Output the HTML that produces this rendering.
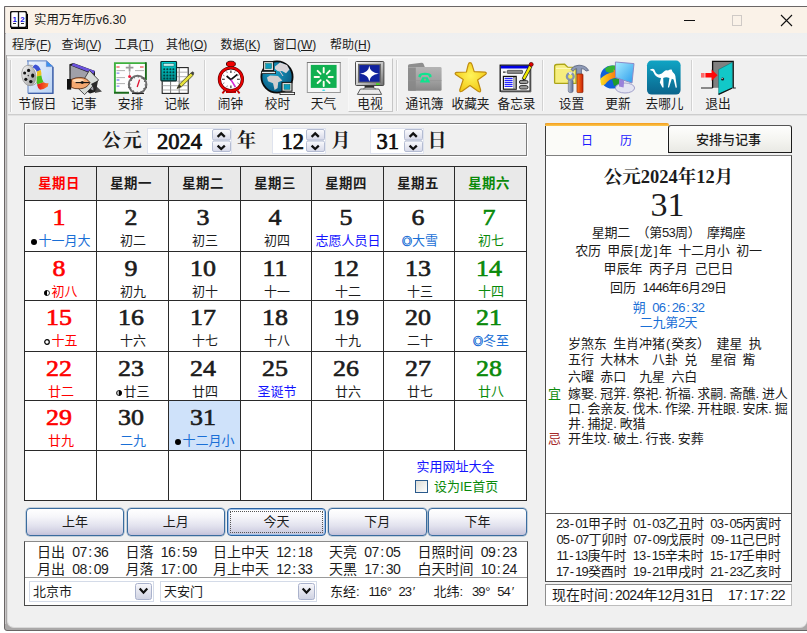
<!DOCTYPE html><html lang="zh-CN"><head><meta charset="utf-8"><title>实用万年历v6.30</title><style>
*{box-sizing:border-box;margin:0;padding:0}
html,body{width:807px;height:633px;overflow:hidden;background:#fff}
body{position:relative;font-family:"Liberation Sans","Noto Sans CJK SC",sans-serif;font-size:13px;color:#1c1c1c}
.a{position:absolute}
.t{position:absolute;white-space:pre;line-height:16px;height:16px}
.c{text-align:center}
.ui{font-size:12px}
.b{font-weight:bold}
.sf{font-family:"Liberation Serif","Noto Serif CJK SC",serif}
.num{position:absolute;font-family:"Liberation Serif","Noto Serif CJK SC",serif;font-size:24px;line-height:24px;height:24px;text-align:center;white-space:pre;-webkit-text-stroke:0.65px currentColor;transform:scaleX(1.08)}
.lun{position:absolute;font-size:13px;line-height:16px;height:16px;text-align:center;white-space:pre}
.r{color:#f00}.g{color:#0a8a0a}.bl{color:#1a6fd6}.fb{color:#1414ff}
.vl{position:absolute;width:1px;background:#2a2a2a}
.hl{position:absolute;height:1px;background:#2a2a2a}
.btn{position:absolute;top:507.5px;height:28px;width:98.5px;border:1px solid #3a6c9e;border-radius:4px;background:linear-gradient(#fff 0%,#f6f6fa 30%,#e2e2ee 65%,#cdcce0 92%,#c2c0da 100%);box-shadow:0 0 0 0.5px rgba(58,108,158,0.5);text-align:center;font-size:13px;line-height:26px}
.spin{position:absolute;width:19px;height:23px;top:129px}
.inp{position:absolute;top:128px;height:26px;background:#fff;border:1px solid #dfe3ee}
.hd{position:absolute;top:127px;height:28px;line-height:28px;font-size:19px;font-weight:bold;font-family:"Liberation Serif","Noto Serif CJK SC",serif;white-space:pre}
.hn{position:absolute;top:128px;height:28px;line-height:28px;font-size:22.5px;font-family:"Liberation Serif",serif;white-space:pre;-webkit-text-stroke:0.7px #000}
i.d{display:inline-block;width:6.5px;font-style:normal;text-align:left}
.ws{word-spacing:2.9px}
u{text-decoration:underline}
</style></head><body>
<div class="a" style="left:4px;top:6px;width:806px;height:625px;background:#aaa8a8;border:1px solid #6a6666;border-radius:0 0 3px 3px"></div>
<div class="a" style="left:5px;top:34px;width:1px;height:590px;background:#c9c7c7"></div>
<div class="a" style="left:7px;top:34px;width:800px;height:594px;background:#f0f0f0;border-left:1px solid #dedede;border-bottom:1px solid #d8d8d8;border-radius:0 0 7px 7px"></div>
<div class="a" style="left:5px;top:7px;width:802px;height:26px;background:#faf2e8;border-left:1px solid #e6e0da"></div>
<div class="a" style="left:6px;top:33px;width:801px;height:22px;background:linear-gradient(#eeeff0,#f0f0f0 30%)"></div>
<div class="a" style="left:7px;top:55px;width:800px;height:1px;background:#c2c2c2"></div>
<div class="a" style="left:7px;top:56px;width:800px;height:1px;background:#ececec"></div>
<div class="a" style="left:7px;top:57px;width:800px;height:1px;background:#fafafa"></div>
<div class="a" style="left:8px;top:114px;width:799px;height:1px;background:#cdcdcd"></div>
<div class="a" style="left:8px;top:115px;width:799px;height:1px;background:#e2e2e2"></div>
<svg class="a" style="left:10px;top:11px" width="18" height="18" viewBox="0 0 18 18"><rect x="0.5" y="0.5" width="16" height="16" rx="2" fill="#fff" stroke="#111" stroke-width="1.6"/><path d="M1 17.2h16.5V3" fill="none" stroke="#000" stroke-width="1.6"/><line x1="8.5" y1="0" x2="8.5" y2="17" stroke="#111" stroke-width="1.3"/><text x="2.6" y="10.5" font-family="Liberation Sans,sans-serif" font-size="8" font-weight="bold" fill="#1414e6">1</text><text x="10.3" y="10.5" font-family="Liberation Sans,sans-serif" font-size="8" font-weight="bold" fill="#1414e6">2</text><rect x="3" y="12" width="3" height="1" fill="#333"/><rect x="11" y="12" width="3" height="1" fill="#333"/></svg>
<div class="t" style="left:34px;top:12px;font-size:12.4px">实用万年历v6.30</div>
<div class="a" style="left:684px;top:20px;width:11px;height:1px;background:#111"></div>
<div class="a" style="left:731.5px;top:15px;width:10.5px;height:10.5px;border:1px solid #cfcac6"></div>
<svg class="a" style="left:780px;top:14px" width="13" height="13" viewBox="0 0 13 13"><path d="M1 1L12 12M12 1L1 12" stroke="#111" stroke-width="1.1" fill="none"/></svg>
<div class="t ui" style="left:12px;top:37px">程序(<u>F</u>)</div>
<div class="t ui" style="left:61.5px;top:37px">查询(<u>V</u>)</div>
<div class="t ui" style="left:114.5px;top:37px">工具(<u>T</u>)</div>
<div class="t ui" style="left:166px;top:37px">其他(<u>O</u>)</div>
<div class="t ui" style="left:220.5px;top:37px">数据(<u>K</u>)</div>
<div class="t ui" style="left:273px;top:37px">窗口(<u>W</u>)</div>
<div class="t ui" style="left:330px;top:37px">帮助(<u>H</u>)</div>
<div class="a" style="left:10px;top:60px;width:1px;height:52px;background:#cfcfcf"></div><div class="a" style="left:11px;top:60px;width:1px;height:52px;background:#fbfbfb"></div>
<div class="a" style="left:204px;top:60px;width:1px;height:51px;background:#d2d2d2"></div>
<div class="a" style="left:205px;top:60px;width:1px;height:51px;background:#fcfcfc"></div>
<div class="a" style="left:396px;top:60px;width:1px;height:51px;background:#d2d2d2"></div>
<div class="a" style="left:397px;top:60px;width:1px;height:51px;background:#fcfcfc"></div>
<div class="a" style="left:542px;top:60px;width:1px;height:51px;background:#d2d2d2"></div>
<div class="a" style="left:543px;top:60px;width:1px;height:51px;background:#fcfcfc"></div>
<div class="a" style="left:691px;top:60px;width:1px;height:51px;background:#d2d2d2"></div>
<div class="a" style="left:692px;top:60px;width:1px;height:51px;background:#fcfcfc"></div>
<div class="a" style="left:348px;top:58px;width:45px;height:54px;background:#f4f4f4;border-right:1px solid #c6c6c6;border-bottom:1px solid #c6c6c6;border-top:1px solid #f8f8f8;border-left:1px solid #f8f8f8"></div>
<svg width="0" height="0" style="position:absolute"><defs>
<linearGradient id="gPage" x1="0" y1="0" x2="1" y2="1"><stop offset="0" stop-color="#eef4fd"/><stop offset="1" stop-color="#b9d2f3"/></linearGradient>
<linearGradient id="gReel" x1="0" y1="0" x2="1" y2="1"><stop offset="0" stop-color="#ffffff"/><stop offset="1" stop-color="#8e8e8e"/></linearGradient>
<linearGradient id="gRed" x1="0" y1="0" x2="1" y2="0"><stop offset="0" stop-color="#e81818"/><stop offset="1" stop-color="#fa7a2a"/></linearGradient>
<linearGradient id="gCalc" x1="0" y1="0" x2="0" y2="1"><stop offset="0" stop-color="#00d0d0"/><stop offset="1" stop-color="#008888"/></linearGradient>
<radialGradient id="gGlobe" cx="0.4" cy="0.35" r="0.75"><stop offset="0" stop-color="#18a0c8"/><stop offset="1" stop-color="#085078"/></radialGradient>
<linearGradient id="gMon" x1="0" y1="0" x2="1" y2="1"><stop offset="0" stop-color="#fafafa"/><stop offset="0.5" stop-color="#c8c8c8"/><stop offset="1" stop-color="#6e6e6e"/></linearGradient>
<linearGradient id="gFold" x1="0" y1="0" x2="0" y2="1"><stop offset="0" stop-color="#b4b4b4"/><stop offset="0.55" stop-color="#a2a2a2"/><stop offset="1" stop-color="#868686"/></linearGradient>
<radialGradient id="gStar" cx="0.5" cy="0.45" r="0.6"><stop offset="0" stop-color="#fff45a"/><stop offset="1" stop-color="#f2c814"/></radialGradient>
<linearGradient id="gHam" x1="0" y1="0" x2="1" y2="0"><stop offset="0" stop-color="#ff7a18"/><stop offset="1" stop-color="#c82008"/></linearGradient>
<linearGradient id="gWr" x1="0" y1="0" x2="1" y2="0"><stop offset="0" stop-color="#b8c2d4"/><stop offset="1" stop-color="#5c6c94"/></linearGradient>
<linearGradient id="gScr" x1="0" y1="0" x2="1" y2="1"><stop offset="0" stop-color="#a8ecff"/><stop offset="1" stop-color="#2a9cec"/></linearGradient>
<linearGradient id="gQn" x1="0" y1="0" x2="0" y2="1"><stop offset="0" stop-color="#10a4c4"/><stop offset="1" stop-color="#0a648c"/></linearGradient>
<linearGradient id="gArr" x1="0" y1="0" x2="1" y2="0"><stop offset="0" stop-color="#fadc20"/><stop offset="1" stop-color="#f87a10"/></linearGradient>
</defs></svg>
<!-- 1 holidays -->
<svg class="a" style="left:16px;top:58px" width="44" height="38" viewBox="0 0 44 38">
<path d="M11.3 2.9H30.4L36.9 8.6V35.3H12V2.9Z" fill="url(#gPage)" stroke="#5f82c4" stroke-width="1"/>
<path d="M12.4 35.3H36.9V9" fill="none" stroke="#3f5fa8" stroke-width="1.3"/>
<path d="M30.4 2.9V8.6H36.9Z" fill="#3a92f2" stroke="#5f82c4" stroke-width="0.6"/>
<ellipse cx="15" cy="17.2" rx="6.9" ry="10.2" transform="rotate(-10 15 17.2)" fill="#f4f4f4" stroke="#8a8a8a" stroke-width="0.7"/><ellipse cx="12.8" cy="17.5" rx="7" ry="10.3" transform="rotate(-10 12.8 17.5)" fill="url(#gReel)" stroke="#8a8a8a" stroke-width="0.6"/>
<circle cx="12.6" cy="12.4" r="1.6" fill="#111"/><circle cx="8.6" cy="15" r="1.5" fill="#111"/><circle cx="9.8" cy="21.3" r="1.6" fill="#111"/><circle cx="14.8" cy="23.6" r="1.7" fill="#111"/><ellipse cx="16.7" cy="17.7" rx="1.6" ry="2.1" fill="#111"/><circle cx="12.3" cy="17.6" r="0.8" fill="#444"/>
<path d="M16.6 9.3Q18 6.6 19.6 6.6Q23 7.6 24.8 12L21 13.6Q19.6 10.6 16.6 9.3Z" fill="#3c52d4"/>
<path d="M21 13.6L24.8 12Q25.6 15 25.4 17.6L20.8 18.6Q21.4 16 21 13.6Z" fill="#f0c21c"/>
<path d="M20.8 18.6L25.4 17.6Q25.8 21.6 27.6 24.2L21 26.4Q20.4 22.4 20.8 18.6Z" fill="#4cc01c"/>
<path d="M21 26.4L27.6 24.2Q30 26 32.5 25L31.8 28.6Q28 31.6 24 31.8Q21.6 30 21 26.4Z" fill="url(#gRed)"/>
</svg>
<!-- 2 notes -->
<svg class="a" style="left:62px;top:58px" width="44" height="38" viewBox="0 0 44 38">
<path d="M7.4 6.2L11.4 5L33 13V34L28 35.4L7.4 22.4Z" fill="#1e1e1e"/><path d="M33 27L40 33.4L33 35Z" fill="#4a4a4a"/>
<path d="M8.6 7.6L31.4 16.6V32.6L8.6 21.4Z" fill="#a0a0a8"/>
<path d="M11.2 5.3L32.8 13L31.6 15.8L9.6 7.4Z" fill="#6a52dc"/>
<path d="M16.4 30.6L27.4 12.4L36.6 22L22.6 36.6Z" fill="#d6dad6" stroke="#3c3c3c" stroke-width="0.9"/>
<path d="M29 26L36 22.6L34 33.4Z" fill="#2a2a2a"/>
<rect x="5" y="21" width="4.2" height="10.6" fill="#111"/>
<path d="M9.4 21.4Q14 19.2 19 19.6Q25 20 28 24.6Q25 30.4 18 30.8Q12 31 9.4 29.4Z" fill="#f4a870" stroke="#4a2008" stroke-width="0.8"/>
<ellipse cx="16.4" cy="22.6" rx="5.4" ry="1.8" fill="#ffd8b4"/>
<path d="M13.6 24.6H27.6" stroke="#111" stroke-width="1.1"/><path d="M17.5 24.5L20.2 23L23 24.5L20.2 26Z" fill="#111"/>
</svg>
<!-- 3 schedule -->
<svg class="a" style="left:109px;top:58px" width="44" height="38" viewBox="0 0 44 38">
<rect x="5.9" y="5.1" width="31" height="29.6" fill="#fdfdfd"/>
<path d="M5.9 34.7V5.1H36.9" fill="none" stroke="#3eb03e" stroke-width="1.9"/>
<path d="M36.9 4.2V22M5 34.7H20" fill="none" stroke="#1c6a1c" stroke-width="1.9"/>
<path d="M7.5 12.6H16M7.5 19.6H16M7.5 25.6H16M26 12.6H35" stroke="#a8a8a8" stroke-width="0.9"/>
<path d="M7.4 9H10.6M31 9H34.6" stroke="#f07070" stroke-width="1.3"/>
<path d="M7.6 15.2H10.4M7.6 22H10.4M7.6 28.2H10.4" stroke="#8a8af0" stroke-width="1.3"/>
<path d="M20.6 6.2V13.4M16.8 9.6H24.4" stroke="#9a9a9a" stroke-width="1.8"/><path d="M20.6 13.4V17" stroke="#b0b0b0" stroke-width="1"/>
<circle cx="20.6" cy="18.4" r="1.5" fill="#f01838"/>
<circle cx="28.6" cy="26.6" r="8.8" fill="#f6f6f6" stroke="#6e6e6e" stroke-width="2"/>
<circle cx="28.6" cy="26.6" r="7.6" fill="none" stroke="#444" stroke-width="1.2" stroke-dasharray="0.8 3.18"/>
<path d="M21.8 19.6L23.4 21.2M35.4 19.6L33.8 21.2M19.2 29.4H20.6M36.6 29.4H38" stroke="#555" stroke-width="1.4"/>
<path d="M28.2 29L30.6 21.6" stroke="#e01030" stroke-width="1.3"/>
<path d="M23 35.4H35" stroke="#222" stroke-width="1.2"/>
</svg>
<!-- 4 accounts -->
<svg class="a" style="left:155px;top:58px" width="44" height="38" viewBox="0 0 44 38">
<rect x="7.2" y="9.6" width="26" height="25.8" fill="#fff" stroke="#222" stroke-width="1.1"/>
<path d="M15.6 10V35M24.2 10V35" stroke="#555" stroke-width="0.8"/>
<path d="M7.5 14.2H33M7.5 18.7H33M7.5 23.2H33M7.5 27.7H33M7.5 32H33" stroke="#9a9a9a" stroke-width="0.8"/>
<rect x="5.9" y="3.5" width="15.6" height="19.4" rx="0.8" fill="url(#gCalc)" stroke="#0a2a2a" stroke-width="1.2"/>
<rect x="8.4" y="5.6" width="10.6" height="2.5" fill="#c4eaea" stroke="#044" stroke-width="0.4"/>
<g fill="#033f3f"><circle cx="9.2" cy="11.2" r="1"/><circle cx="12.3" cy="11.2" r="1"/><circle cx="15.4" cy="11.2" r="1"/><circle cx="18.4" cy="11.2" r="1"/><circle cx="9.2" cy="14.3" r="1"/><circle cx="12.3" cy="14.3" r="1"/><circle cx="15.4" cy="14.3" r="1"/><circle cx="18.4" cy="14.3" r="1"/><circle cx="9.2" cy="17.4" r="1"/><circle cx="12.3" cy="17.4" r="1"/><circle cx="15.4" cy="17.4" r="1"/><circle cx="18.4" cy="17.4" r="1"/><circle cx="9.2" cy="20.4" r="1"/><circle cx="12.3" cy="20.4" r="1"/><circle cx="15.4" cy="20.4" r="1"/><circle cx="18.4" cy="20.4" r="1"/></g>
<path d="M22 30.4L24.4 26.2L36.4 14.6L38.6 16.8L26.4 28.8Z" fill="#e6e23c" stroke="#44441a" stroke-width="0.8"/>
<path d="M22 30.4L24.4 26.2L26.4 28.8Z" fill="#333"/>
<path d="M35.6 15.2L37.6 13.2L39.4 15L37.6 17.2Z" fill="#444"/>
</svg>
<!-- 5 alarm -->
<svg class="a" style="left:209px;top:58px" width="44" height="38" viewBox="0 0 44 38">
<ellipse cx="21.9" cy="6" rx="4.5" ry="2.8" fill="#f20000" stroke="#3c0000" stroke-width="0.9"/>
<path d="M15.6 32.6L13.4 35.4M28.4 32.6L30.6 35.4M17 34H27" stroke="#c80000" stroke-width="1.8"/>
<circle cx="21.9" cy="21.3" r="11.5" fill="#fff" stroke="#5a0000" stroke-width="3.2"/>
<circle cx="21.9" cy="21.3" r="11.5" fill="none" stroke="#e60000" stroke-width="2"/>
<path d="M21.9 12.4V15M21.9 27.6V30.2M13 21.3H15.8M28 21.3H30.8" stroke="#222" stroke-width="1.1"/>
<path d="M17.6 13.4L18.4 15M26.2 13.4L25.4 15M17.6 29.2L18.4 27.6M26.2 29.2L25.4 27.6M14 17L15.4 17.8M14 25.6L15.4 24.8M29.8 17L28.4 17.8M29.8 25.6L28.4 24.8" stroke="#8a8a9a" stroke-width="1"/>
<path d="M17.6 18L21.9 21.6L28.4 16.4" fill="none" stroke="#111" stroke-width="1.7"/>
<path d="M21.9 21.6L26.4 29" stroke="#d428d4" stroke-width="1.5"/>
</svg>
<!-- 6 time sync -->
<svg class="a" style="left:256px;top:58px" width="44" height="38" viewBox="0 0 44 38">
<circle cx="21" cy="19" r="15.6" fill="url(#gGlobe)" stroke="#0a0a0a" stroke-width="1.8"/>
<path d="M11 19.6L14 17.6L22 18L26.4 22.4L22.2 24.2L21.6 30L18.6 32L17 25.2L12 23.2Z" fill="#d2cece"/>
<path d="M19 8.4L24 4.6L31 7L33.4 11.4L30 15.2L26 13L22 13.2L19 11Z" fill="#d8d4d8"/>
<path d="M23 12L27 18" stroke="#e8c8d0" stroke-width="1"/>
<rect x="7.6" y="3.6" width="10" height="9" fill="#dcdcdc" stroke="#111" stroke-width="1"/>
<rect x="9.6" y="5.5" width="6" height="5.2" fill="#0e9cc0" stroke="#064" stroke-width="0.4"/>
<rect x="5.6" y="13.4" width="14" height="2.2" fill="#ececec" stroke="#222" stroke-width="0.8"/>
<rect x="26" y="24.4" width="10" height="8.8" fill="#dcdcdc" stroke="#111" stroke-width="1"/>
<rect x="28" y="26.4" width="6" height="5" fill="#0e9cc0" stroke="#064" stroke-width="0.4"/>
<rect x="24" y="34.4" width="14.6" height="2.2" fill="#f4f4f4" stroke="#222" stroke-width="0.8"/>
</svg>
<!-- 7 weather -->
<svg class="a" style="left:302px;top:58px" width="44" height="38" viewBox="0 0 44 38">
<rect x="5.3" y="4.5" width="33" height="30" fill="#f6f6f6" stroke="#9a9a9a" stroke-width="1"/>
<path d="M5 4.5H38.6" stroke="#777" stroke-width="1"/>
<rect x="8.8" y="6.9" width="25.8" height="23" fill="#10b050"/>
<g stroke="#fffdf0" stroke-width="1.9" stroke-linecap="round"><path d="M21.7 10V14.4M21.7 23.8V28M12.6 19H17M26.6 19H30.8M15.6 12.8L18.6 15.8M27.6 12.8L24.8 15.8M15.6 25L18.6 22.2M27.6 25L24.8 22.2"/></g>
<ellipse cx="21.7" cy="32.3" rx="1.6" ry="0.7" fill="#3cd6ea"/>
</svg>
<!-- 8 tv -->
<svg class="a" style="left:348px;top:58px" width="44" height="38" viewBox="0 0 44 38">
<rect x="7.5" y="3.5" width="28.4" height="24" rx="1" fill="url(#gMon)" stroke="#3a3a3a" stroke-width="0.9"/>
<rect x="10" y="5.8" width="23" height="19" fill="#6a6a6a"/>
<rect x="11.4" y="7.1" width="20.2" height="16.6" fill="#10229e"/>
<path d="M21.3 7.8Q21.9 14.6 30.8 15.8Q21.9 16.8 21.3 23.4Q20.7 16.8 12 15.8Q20.7 14.6 21.3 7.8Z" fill="#fff"/>
<ellipse cx="21.3" cy="15.8" rx="3" ry="2.6" fill="#fff" opacity="0.8"/>
<rect x="28" y="25.3" width="3.6" height="1.7" fill="#46d420"/>
<rect x="16.6" y="27.6" width="9.6" height="2.6" fill="#2e2e2e"/>
<path d="M12.4 31H30.8L33.6 36.4H9.4Z" fill="#eaeaea" stroke="#4a4a4a" stroke-width="0.9"/>
<path d="M15 31L18 29.6H25L28 31" fill="#aaa" stroke="#555" stroke-width="0.6"/>
</svg>
<!-- 9 contacts -->
<svg class="a" style="left:402px;top:58px" width="44" height="38" viewBox="0 0 44 38">
<path d="M6 10V7.6Q6 6.4 7.4 6.2L19.6 4.8Q21 4.8 21.6 6L22.6 8.6V10Z" fill="#8e8e8e"/>
<rect x="6" y="9" width="33.6" height="23.8" rx="1.4" fill="url(#gFold)"/>
<rect x="6" y="9.6" width="7.8" height="23.2" fill="#868686" opacity="0.8"/>
<path d="M6 22.6H39.6" stroke="#929292" stroke-width="0.6"/>
<path d="M16.4 19Q16 16.4 18.4 15.6Q23 14 27.6 15.6Q30 16.4 29.6 19L27.2 19.4Q27 17.4 25.6 17H20.4Q19 17.4 18.8 19.4Z" fill="#0ee48e"/>
<path d="M20.4 19.2H25.6L28.2 24.6H17.8Z" fill="#0ee48e"/>
<circle cx="23" cy="21.6" r="1.2" fill="#9a9a9a"/>
</svg>
<!-- 10 favourites -->
<svg class="a" style="left:449px;top:58px" width="44" height="38" viewBox="0 0 44 38">
<path d="M21 4.6Q22.4 4.6 23 6.6L25.2 13.6L36 14.2Q38.4 14.8 36.4 16.6L28.6 22L31.6 32Q31.8 34.6 29.4 33.4L21 27.6L13 33.2Q10.400 34.400 10.800 31.800L14.200 21.600L7 16.800Q5 15 7.600 14.400L17.400 14L19.200 6.600Q19.800 4.600 21 4.600Z" fill="url(#gStar)" stroke="#c08c10" stroke-width="1.2" stroke-linejoin="round"/>
</svg>
<!-- 11 memo -->
<svg class="a" style="left:495px;top:58px" width="44" height="38" viewBox="0 0 44 38">
<rect x="5.2" y="7.2" width="30" height="26" fill="#f8f8f8" stroke="#111" stroke-width="1.3"/>
<rect x="5.8" y="7.8" width="27.4" height="2.7" fill="#0000e4"/>
<path d="M6 34H36V11" fill="none" stroke="#777" stroke-width="0.8"/>
<rect x="8" y="13.4" width="2.6" height="1.5" fill="#555"/>
<rect x="12.200" y="12.400" width="15.400" height="3" rx="0.600" fill="#8a8a8a" stroke="#333" stroke-width="0.700"/>
<rect x="8.400" y="18.400" width="12.800" height="12.800" fill="#fff" stroke="#111" stroke-width="1.200"/>
<path d="M9.600 20.400H17.600M9.600 22.400H17.600M9.600 24.400H17.600M9.600 26.400H17.600M9.600 28.400H17.600" stroke="#2828ff" stroke-width="1.100"/>
<rect x="18.800" y="19.200" width="1.800" height="11.400" fill="#b4b4b4" stroke="#444" stroke-width="0.400"/>
<rect x="24.400" y="22.400" width="8.600" height="3.200" rx="1.600" fill="#9a9a9a" stroke="#222" stroke-width="0.900"/>
<rect x="24.400" y="27.600" width="8.600" height="3.400" rx="1.700" fill="#9a9a9a" stroke="#222" stroke-width="0.900"/>
<path d="M28.400 21.400L35.600 8" stroke="#222" stroke-width="3.800" stroke-linecap="butt"/>
<path d="M28.600 21L35.400 8.400" stroke="#f2ea00" stroke-width="2.400"/>
<circle cx="36.200" cy="6.400" r="2" fill="#e40000" stroke="#400" stroke-width="0.700"/>
<path d="M27.400 22.800L28 20.400L30 21.400Z" fill="#111"/>
</svg>
<!-- 12 settings -->
<svg class="a" style="left:549px;top:58px" width="44" height="38" viewBox="0 0 44 38">
<path d="M5.600 24.400V8.600Q5.600 6.600 7.600 6.500L15.600 6.200L19 9.400H27V25.400H6.600Q5.600 25.400 5.600 24.400Z" fill="#f6ee7e" stroke="#aca418" stroke-width="1.300"/>
<path d="M7 10.400H26" stroke="#fdf8b8" stroke-width="1.200"/>
<path d="M22 11.400Q24 7.400 30 7.200Q37 7.400 39.600 12.400L37.200 13Q35 10.600 32.400 10.600V16.400H27.600V10.600Q25.200 10.800 24.200 13.400Z" fill="#8e9ab6" stroke="#56607c" stroke-width="0.800"/>
<rect x="28" y="16" width="6" height="18.600" rx="0.800" fill="url(#gHam)" stroke="#8a2000" stroke-width="0.700"/>
<rect x="19.300" y="21.600" width="4.800" height="13" rx="1.800" fill="url(#gWr)" stroke="#56607c" stroke-width="0.600"/>
<circle cx="21.300" cy="18.400" r="3.400" fill="#f4ec50" stroke="#8494b0" stroke-width="2.300"/>
<path d="M19.600 14.200L21.300 16.600L23 14.200" fill="#f0f0f0" stroke="#f0f0f0" stroke-width="1"/>
</svg>
<!-- 13 update -->
<svg class="a" style="left:596px;top:58px" width="44" height="38" viewBox="0 0 44 38">
<circle cx="16" cy="19" r="11.600" fill="#1060da"/>
<path d="M9 10.400Q13 6.600 19 7.600L20 13L14 15L10 13.400Z" fill="#34b434"/>
<path d="M16 21L23 20L24 26L18 28Z" fill="#1f9c2c"/>
<path d="M4.600 20.600Q10 15.400 17.600 14V11.200L20 13.400V19.400Q13 20.600 9 26.400L5.600 27.600Q4 24 4.600 20.600Z" fill="url(#gArr)"/>
<ellipse cx="29" cy="30" rx="9.600" ry="5" fill="#e4e4f2" stroke="#9a9ac6" stroke-width="0.900"/>
<path d="M23 20.600L28.200 22.400L27.600 29.400L23 28.400Z" fill="#9a82da"/>
<path d="M19.400 4L38 5.600L36 25L19.600 19.600Z" fill="url(#gScr)" stroke="#8c8cc8" stroke-width="1"/>
</svg>
<!-- 14 qunar -->
<svg class="a" style="left:642px;top:58px" width="44" height="38" viewBox="0 0 44 38">
<rect x="5" y="2.600" width="33.600" height="34" rx="4.600" fill="url(#gQn)"/>
<path d="M8.300 11.200L11 10.800Q12.600 11 13 13Q14 16.400 17 16.400Q20 16 22 13.600Q24 11.600 26 12.600Q28 11 29.600 11.600L30.600 14Q33.600 16 33.600 20L34.900 29.600L33.700 29.800L31.600 21.600L29.800 20.800L27 29.600L25.900 29.400L27.400 20Q24 18.600 21.200 20L21.600 29.600L20.400 29.600L17.800 24.600L19 20Q15 20 12.600 16.600Q11.600 14 10.600 13L8.300 12.300Z" fill="#fff"/>
</svg>
<!-- 15 exit -->
<svg class="a" style="left:696px;top:58px" width="44" height="38" viewBox="0 0 44 38">
<rect x="16.600" y="3.400" width="20.600" height="26.400" fill="#808080"/>
<path d="M16.600 30V3.400H37.200V30" fill="none" stroke="#111" stroke-width="1.300"/>
<path d="M5 30H16.600M37 30H39.800" stroke="#222" stroke-width="1.200"/>
<path d="M22.600 11.600L36.400 4.200V30L22.600 36.400Z" fill="#12c8c8" stroke="#0a6a6a" stroke-width="0.500"/>
<path d="M22.600 36.400L36.400 30" stroke="#111" stroke-width="1.200"/>
<circle cx="26.600" cy="21" r="1.600" fill="#222"/><circle cx="26.100" cy="20.500" r="0.600" fill="#fff"/>
<rect x="5" y="15" width="3.600" height="4.600" fill="#ff6a6a"/>
<path d="M9.400 15H15.600V11.400L21.600 17.200L15.600 22.800V19.600H9.400Z" fill="#ff0808"/>
</svg>

<div class="t c" style="left:7.5px;top:95.5px;width:60px;font-size:12.7px">节假日</div>
<div class="t c" style="left:54px;top:95.5px;width:60px;font-size:12.7px">记事</div>
<div class="t c" style="left:100.5px;top:95.5px;width:60px;font-size:12.7px">安排</div>
<div class="t c" style="left:147px;top:95.5px;width:60px;font-size:12.7px">记帐</div>
<div class="t c" style="left:200.5px;top:95.5px;width:60px;font-size:12.7px">闹钟</div>
<div class="t c" style="left:247.5px;top:95.5px;width:60px;font-size:12.7px">校时</div>
<div class="t c" style="left:293.5px;top:95.5px;width:60px;font-size:12.7px">天气</div>
<div class="t c" style="left:340px;top:95.5px;width:60px;font-size:12.7px">电视</div>
<div class="t c" style="left:394.5px;top:95.5px;width:60px;font-size:12.7px">通讯簿</div>
<div class="t c" style="left:440.5px;top:95.5px;width:60px;font-size:12.7px">收藏夹</div>
<div class="t c" style="left:486.5px;top:95.5px;width:60px;font-size:12.7px">备忘录</div>
<div class="t c" style="left:541.5px;top:95.5px;width:60px;font-size:12.7px">设置</div>
<div class="t c" style="left:588px;top:95.5px;width:60px;font-size:12.7px">更新</div>
<div class="t c" style="left:634.5px;top:95.5px;width:60px;font-size:12.7px">去哪儿</div>
<div class="t c" style="left:688px;top:95.5px;width:60px;font-size:12.7px">退出</div>
<div class="a" style="left:24px;top:123px;width:503px;height:33px;border:1px solid #7c7c7c;box-shadow:inset 1px 1px 0 #fff, 1px 1px 0 #fff"></div>
<div class="hd" style="left:102px;letter-spacing:1.8px">公元</div>
<div class="inp" style="left:147px;width:85px"></div>
<div class="hn" style="left:157px">2024</div>
<div class="hd" style="left:237px">年</div>
<div class="inp" style="left:272px;width:54px"></div>
<div class="hn" style="left:281.5px">12</div>
<div class="hd" style="left:331.5px">月</div>
<div class="inp" style="left:370px;width:54px"></div>
<div class="hn" style="left:376.5px">31</div>
<div class="hd" style="left:427.5px">日</div>
<svg class="spin" style="left:212px" width="19" height="23" viewBox="0 0 19 23"><defs><linearGradient id="sg0" x1="0" y1="0" x2="0" y2="1"><stop offset="0" stop-color="#fbfbfd"/><stop offset="1" stop-color="#d6d8e8"/></linearGradient></defs><rect x="0.5" y="0.5" width="18" height="10.5" rx="1.5" fill="url(#sg0)" stroke="#b4bcd2"/><rect x="0.5" y="12" width="18" height="10.5" rx="1.5" fill="url(#sg0)" stroke="#b4bcd2"/><path d="M5.6 7.8L9.2 4.4L12.8 7.8" fill="none" stroke="#111" stroke-width="2.3"/><path d="M5.6 16.6L9.2 20L12.8 16.6" fill="none" stroke="#111" stroke-width="2.3"/></svg>
<svg class="spin" style="left:306px" width="19" height="23" viewBox="0 0 19 23"><defs><linearGradient id="sg1" x1="0" y1="0" x2="0" y2="1"><stop offset="0" stop-color="#fbfbfd"/><stop offset="1" stop-color="#d6d8e8"/></linearGradient></defs><rect x="0.5" y="0.5" width="18" height="10.5" rx="1.5" fill="url(#sg1)" stroke="#b4bcd2"/><rect x="0.5" y="12" width="18" height="10.5" rx="1.5" fill="url(#sg1)" stroke="#b4bcd2"/><path d="M5.6 7.8L9.2 4.4L12.8 7.8" fill="none" stroke="#111" stroke-width="2.3"/><path d="M5.6 16.6L9.2 20L12.8 16.6" fill="none" stroke="#111" stroke-width="2.3"/></svg>
<svg class="spin" style="left:404px" width="19" height="23" viewBox="0 0 19 23"><defs><linearGradient id="sg2" x1="0" y1="0" x2="0" y2="1"><stop offset="0" stop-color="#fbfbfd"/><stop offset="1" stop-color="#d6d8e8"/></linearGradient></defs><rect x="0.5" y="0.5" width="18" height="10.5" rx="1.5" fill="url(#sg2)" stroke="#b4bcd2"/><rect x="0.5" y="12" width="18" height="10.5" rx="1.5" fill="url(#sg2)" stroke="#b4bcd2"/><path d="M5.6 7.8L9.2 4.4L12.8 7.8" fill="none" stroke="#111" stroke-width="2.3"/><path d="M5.6 16.6L9.2 20L12.8 16.6" fill="none" stroke="#111" stroke-width="2.3"/></svg>
<div class="a" style="left:25px;top:167px;width:501px;height:33px;background:#e9e9e9"></div>
<div class="a" style="left:25px;top:201px;width:501px;height:299px;background:#fff"></div>
<div class="a" style="left:169px;top:401px;width:71px;height:49px;background:#cfe2fa"></div>
<div class="vl" style="left:24px;top:166px;height:335px"></div>
<div class="vl" style="left:96px;top:166px;height:335px"></div>
<div class="vl" style="left:168px;top:166px;height:335px"></div>
<div class="vl" style="left:240px;top:166px;height:335px"></div>
<div class="vl" style="left:311px;top:166px;height:335px"></div>
<div class="vl" style="left:383px;top:166px;height:335px"></div>
<div class="vl" style="left:454px;top:166px;height:285px"></div>
<div class="vl" style="left:526px;top:166px;height:335px"></div>
<div class="hl" style="left:24px;top:166px;width:503px"></div>
<div class="hl" style="left:24px;top:200px;width:503px"></div>
<div class="hl" style="left:24px;top:251px;width:503px"></div>
<div class="hl" style="left:24px;top:300px;width:503px"></div>
<div class="hl" style="left:24px;top:351px;width:503px"></div>
<div class="hl" style="left:24px;top:400px;width:503px"></div>
<div class="hl" style="left:24px;top:450px;width:503px"></div>
<div class="hl" style="left:24px;top:500px;width:503px"></div>
<div class="t b c r" style="left:23px;top:175.5px;width:72px;font-size:13.4px;letter-spacing:0.4px">星期日</div>
<div class="t b c" style="left:95px;top:175.5px;width:72px;font-size:13.4px;letter-spacing:0.4px">星期一</div>
<div class="t b c" style="left:167px;top:175.5px;width:72px;font-size:13.4px;letter-spacing:0.4px">星期二</div>
<div class="t b c" style="left:239px;top:175.5px;width:72px;font-size:13.4px;letter-spacing:0.4px">星期三</div>
<div class="t b c" style="left:310px;top:175.5px;width:72px;font-size:13.4px;letter-spacing:0.4px">星期四</div>
<div class="t b c" style="left:382px;top:175.5px;width:72px;font-size:13.4px;letter-spacing:0.4px">星期五</div>
<div class="t b c g" style="left:453px;top:175.5px;width:72px;font-size:13.4px;letter-spacing:0.4px">星期六</div>
<div class="num r" style="left:23px;top:205px;width:72px">1</div>
<div class="lun bl" style="left:25px;top:233px;width:72px"><svg width="6" height="6" viewBox="0 0 6 6" style="vertical-align:0px;margin-right:1px"><circle cx="3" cy="3" r="3" fill="#000"/></svg>十一月大</div>
<div class="num" style="left:95px;top:205px;width:72px">2</div>
<div class="lun" style="left:97px;top:233px;width:72px">初二</div>
<div class="num" style="left:167px;top:205px;width:72px">3</div>
<div class="lun" style="left:169px;top:233px;width:72px">初三</div>
<div class="num" style="left:239px;top:205px;width:72px">4</div>
<div class="lun" style="left:241px;top:233px;width:72px">初四</div>
<div class="num" style="left:310px;top:205px;width:72px">5</div>
<div class="lun fb" style="left:312px;top:233px;width:72px">志愿人员日</div>
<div class="num" style="left:382px;top:205px;width:72px">6</div>
<div class="lun bl" style="left:384px;top:233px;width:72px"><span style="display:inline-block;width:10px;font-size:10px;vertical-align:0.5px;text-align:center;-webkit-text-stroke:0.55px currentColor">◎</span>大雪</div>
<div class="num g" style="left:453px;top:205px;width:72px">7</div>
<div class="lun g" style="left:455px;top:233px;width:72px">初七</div>
<div class="num r" style="left:23px;top:256px;width:72px">8</div>
<div class="lun r" style="left:25px;top:284px;width:72px"><svg width="6" height="6" viewBox="0 0 6 6" style="vertical-align:0px;margin-right:1px"><circle cx="3" cy="3" r="2.5" fill="#fff" stroke="#000" stroke-width="0.8"/><path d="M3 0.2A2.8 2.8 0 0 0 3 5.8Z" fill="#000"/></svg>初八</div>
<div class="num" style="left:95px;top:256px;width:72px">9</div>
<div class="lun" style="left:97px;top:284px;width:72px">初九</div>
<div class="num" style="left:167px;top:256px;width:72px">10</div>
<div class="lun" style="left:169px;top:284px;width:72px">初十</div>
<div class="num" style="left:239px;top:256px;width:72px">11</div>
<div class="lun" style="left:241px;top:284px;width:72px">十一</div>
<div class="num" style="left:310px;top:256px;width:72px">12</div>
<div class="lun" style="left:312px;top:284px;width:72px">十二</div>
<div class="num" style="left:382px;top:256px;width:72px">13</div>
<div class="lun" style="left:384px;top:284px;width:72px">十三</div>
<div class="num g" style="left:453px;top:256px;width:72px">14</div>
<div class="lun g" style="left:455px;top:284px;width:72px">十四</div>
<div class="num r" style="left:23px;top:305px;width:72px">15</div>
<div class="lun r" style="left:25px;top:333px;width:72px"><svg width="6" height="6" viewBox="0 0 6 6" style="vertical-align:0px;margin-right:1px"><circle cx="3" cy="3" r="2.3" fill="#fff" stroke="#000" stroke-width="1.2"/></svg>十五</div>
<div class="num" style="left:95px;top:305px;width:72px">16</div>
<div class="lun" style="left:97px;top:333px;width:72px">十六</div>
<div class="num" style="left:167px;top:305px;width:72px">17</div>
<div class="lun" style="left:169px;top:333px;width:72px">十七</div>
<div class="num" style="left:239px;top:305px;width:72px">18</div>
<div class="lun" style="left:241px;top:333px;width:72px">十八</div>
<div class="num" style="left:310px;top:305px;width:72px">19</div>
<div class="lun" style="left:312px;top:333px;width:72px">十九</div>
<div class="num" style="left:382px;top:305px;width:72px">20</div>
<div class="lun" style="left:384px;top:333px;width:72px">二十</div>
<div class="num g" style="left:453px;top:305px;width:72px">21</div>
<div class="lun bl" style="left:455px;top:333px;width:72px"><span style="display:inline-block;width:10px;font-size:10px;vertical-align:0.5px;text-align:center;-webkit-text-stroke:0.55px currentColor">◎</span>冬至</div>
<div class="num r" style="left:23px;top:356px;width:72px">22</div>
<div class="lun r" style="left:25px;top:384px;width:72px">廿二</div>
<div class="num" style="left:95px;top:356px;width:72px">23</div>
<div class="lun" style="left:97px;top:384px;width:72px"><svg width="6" height="6" viewBox="0 0 6 6" style="vertical-align:0px;margin-right:1px"><circle cx="3" cy="3" r="2.5" fill="#bbb" stroke="#000" stroke-width="0.8"/><path d="M3 0.2A2.8 2.8 0 0 1 3 5.8Z" fill="#000"/></svg>廿三</div>
<div class="num" style="left:167px;top:356px;width:72px">24</div>
<div class="lun" style="left:169px;top:384px;width:72px">廿四</div>
<div class="num" style="left:239px;top:356px;width:72px">25</div>
<div class="lun fb" style="left:241px;top:384px;width:72px">圣诞节</div>
<div class="num" style="left:310px;top:356px;width:72px">26</div>
<div class="lun" style="left:312px;top:384px;width:72px">廿六</div>
<div class="num" style="left:382px;top:356px;width:72px">27</div>
<div class="lun" style="left:384px;top:384px;width:72px">廿七</div>
<div class="num g" style="left:453px;top:356px;width:72px">28</div>
<div class="lun g" style="left:455px;top:384px;width:72px">廿八</div>
<div class="num r" style="left:23px;top:405px;width:72px">29</div>
<div class="lun r" style="left:25px;top:433px;width:72px">廿九</div>
<div class="num" style="left:95px;top:405px;width:72px">30</div>
<div class="lun bl" style="left:97px;top:433px;width:72px">二九</div>
<div class="num" style="left:167px;top:405px;width:72px">31</div>
<div class="lun bl" style="left:169px;top:433px;width:72px"><svg width="6" height="6" viewBox="0 0 6 6" style="vertical-align:0px;margin-right:1px"><circle cx="3" cy="3" r="3" fill="#000"/></svg>十二月小</div>
<div class="t c fb" style="left:384px;top:459px;width:143px">实用网址大全</div>
<div class="a" style="left:415px;top:480px;width:13px;height:13px;border:1px solid #2a5a8c;background:linear-gradient(135deg,#dcdcd6,#fff)"></div>
<div class="t g" style="left:434px;top:479px">设为IE首页</div>
<div class="btn" style="left:25.8px">上年</div>
<div class="btn" style="left:126.6px">上月</div>
<div class="btn" style="left:227.3px;border-color:#2a62a0;box-shadow:inset 0 0 0 1px #9cc0e8"><div class="a" style="left:2px;top:2px;right:2px;bottom:2px;border:1px dotted #555"></div>今天</div>
<div class="btn" style="left:328px">下月</div>
<div class="btn" style="left:428.3px">下年</div>
<div class="a" style="left:24px;top:541px;width:504px;height:65px;background:#fff;border:1px solid #4a4a4a;border-top-color:#8a8a8a"></div>
<div class="a" style="left:25px;top:577px;width:502px;height:1px;background:#9a9a9a"></div>
<div class="t" style="left:37px;top:544px;font-size:14px">日出<i style="display:inline-block;font-style:normal;width:7.2px;text-align:center">&nbsp;</i><span style="letter-spacing:-0.59px">07</span><i style="display:inline-block;font-style:normal;width:7.2px;text-align:center">:</i><span style="letter-spacing:-0.59px">36</span></div>
<div class="t" style="left:125.5px;top:544px;font-size:14px">日落<i style="display:inline-block;font-style:normal;width:7.2px;text-align:center">&nbsp;</i><span style="letter-spacing:-0.59px">16</span><i style="display:inline-block;font-style:normal;width:7.2px;text-align:center">:</i><span style="letter-spacing:-0.59px">59</span></div>
<div class="t" style="left:213px;top:544px;font-size:14px">日上中天<i style="display:inline-block;font-style:normal;width:7.2px;text-align:center">&nbsp;</i><span style="letter-spacing:-0.59px">12</span><i style="display:inline-block;font-style:normal;width:7.2px;text-align:center">:</i><span style="letter-spacing:-0.59px">18</span></div>
<div class="t" style="left:329px;top:544px;font-size:14px">天亮<i style="display:inline-block;font-style:normal;width:7.2px;text-align:center">&nbsp;</i><span style="letter-spacing:-0.59px">07</span><i style="display:inline-block;font-style:normal;width:7.2px;text-align:center">:</i><span style="letter-spacing:-0.59px">05</span></div>
<div class="t" style="left:417.5px;top:544px;font-size:14px">日照时间<i style="display:inline-block;font-style:normal;width:7.2px;text-align:center">&nbsp;</i><span style="letter-spacing:-0.59px">09</span><i style="display:inline-block;font-style:normal;width:7.2px;text-align:center">:</i><span style="letter-spacing:-0.59px">23</span></div>
<div class="t" style="left:37px;top:561px;font-size:14px">月出<i style="display:inline-block;font-style:normal;width:7.2px;text-align:center">&nbsp;</i><span style="letter-spacing:-0.59px">08</span><i style="display:inline-block;font-style:normal;width:7.2px;text-align:center">:</i><span style="letter-spacing:-0.59px">09</span></div>
<div class="t" style="left:125.5px;top:561px;font-size:14px">月落<i style="display:inline-block;font-style:normal;width:7.2px;text-align:center">&nbsp;</i><span style="letter-spacing:-0.59px">17</span><i style="display:inline-block;font-style:normal;width:7.2px;text-align:center">:</i><span style="letter-spacing:-0.59px">00</span></div>
<div class="t" style="left:213px;top:561px;font-size:14px">月上中天<i style="display:inline-block;font-style:normal;width:7.2px;text-align:center">&nbsp;</i><span style="letter-spacing:-0.59px">12</span><i style="display:inline-block;font-style:normal;width:7.2px;text-align:center">:</i><span style="letter-spacing:-0.59px">33</span></div>
<div class="t" style="left:329px;top:561px;font-size:14px">天黑<i style="display:inline-block;font-style:normal;width:7.2px;text-align:center">&nbsp;</i><span style="letter-spacing:-0.59px">17</span><i style="display:inline-block;font-style:normal;width:7.2px;text-align:center">:</i><span style="letter-spacing:-0.59px">30</span></div>
<div class="t" style="left:417.5px;top:561px;font-size:14px">白天时间<i style="display:inline-block;font-style:normal;width:7.2px;text-align:center">&nbsp;</i><span style="letter-spacing:-0.59px">10</span><i style="display:inline-block;font-style:normal;width:7.2px;text-align:center">:</i><span style="letter-spacing:-0.59px">24</span></div>
<div class="a" style="left:29px;top:581px;width:125px;height:21px;background:#fff;border:1px solid #d4dbe8"></div>
<div class="t" style="left:33px;top:584px">北京市</div>
<svg class="a" style="left:135px;top:583px" width="17" height="17" viewBox="0 0 17 17"><defs><linearGradient id="cg29" x1="0" y1="0" x2="0" y2="1"><stop offset="0" stop-color="#f8f8fb"/><stop offset="1" stop-color="#cfd2e2"/></linearGradient></defs><rect x="0.5" y="0.5" width="16" height="16" rx="2" fill="url(#cg29)" stroke="#aab2cc"/><path d="M4.7 5.6L8.5 9.7L12.3 5.6" fill="none" stroke="#111" stroke-width="2.2"/></svg>
<div class="a" style="left:160px;top:581px;width:157px;height:21px;background:#fff;border:1px solid #d4dbe8"></div>
<div class="t" style="left:164px;top:584px">天安门</div>
<svg class="a" style="left:298px;top:583px" width="17" height="17" viewBox="0 0 17 17"><defs><linearGradient id="cg160" x1="0" y1="0" x2="0" y2="1"><stop offset="0" stop-color="#f8f8fb"/><stop offset="1" stop-color="#cfd2e2"/></linearGradient></defs><rect x="0.5" y="0.5" width="16" height="16" rx="2" fill="url(#cg160)" stroke="#aab2cc"/><path d="M4.7 5.6L8.5 9.7L12.3 5.6" fill="none" stroke="#111" stroke-width="2.2"/></svg>
<div class="t" style="left:330px;top:584px">东经:</div>
<div class="t" style="left:368.5px;top:584px"><span style="letter-spacing:-1.03px">116</span><i style="display:inline-block;font-style:normal;width:6.2px;text-align:center">°</i><i style="display:inline-block;font-style:normal;width:6.2px;text-align:center">&nbsp;</i><span style="letter-spacing:-1.03px">23</span><i style="display:inline-block;font-style:normal;width:6.2px;text-align:center">′</i></div>
<div class="t" style="left:433.5px;top:584px">北纬:</div>
<div class="t" style="left:472px;top:584px"><span style="letter-spacing:-0.93px">39</span><i style="display:inline-block;font-style:normal;width:6.3px;text-align:center">°</i><i style="display:inline-block;font-style:normal;width:6.3px;text-align:center">&nbsp;</i><span style="letter-spacing:-0.93px">54</span><i style="display:inline-block;font-style:normal;width:6.3px;text-align:center">′</i></div>
<div class="a" style="left:668px;top:125px;width:124px;height:28px;border:1px solid #1c1c1c;border-top-color:#555;border-radius:3px 3px 0 0;background:linear-gradient(#fefefd,#f4f4f0 55%,#e9e9e4)"></div>
<div class="t c" style="left:666.5px;top:132px;width:124px;font-weight:500">安排与记事</div>
<div class="a" style="left:545px;top:155px;width:247px;height:427px;background:#fff;border:1px solid #4a4a4a;border-top:1px solid #808080"></div>
<div class="a" style="left:545px;top:123px;width:123px;height:32px;background:#fbfbf8;border-left:1px solid #3a3a3a;border-right:1px solid #fff;border-radius:2px 2px 0 0"></div>
<div class="a" style="left:545px;top:123px;width:124px;height:3px;background:linear-gradient(#f49c1c,#fbc850);border-radius:2px 2px 0 0"></div>
<div class="t ui" style="left:581px;top:133px;color:#1a1aff">日</div>
<div class="t ui" style="left:620px;top:133px;color:#1a1aff">历</div>
<div class="t c b sf" style="left:546px;top:165px;width:245px;font-size:18.5px;line-height:24px;height:24px">公元2024年12月</div>
<div class="t c sf" style="left:545px;top:185px;width:245px;font-size:34px;line-height:40px;height:40px">31</div>
<div class="t c" style="left:546px;top:225px;width:245px;letter-spacing:-0.25px">星期二<i style="display:inline-block;font-style:normal;width:6.5px;text-align:center">&nbsp;</i>（第<span style="letter-spacing:-0.73px">53</span>周）<i style="display:inline-block;font-style:normal;width:6.5px;text-align:center">&nbsp;</i>摩羯座</div>
<div class="t c" style="left:546px;top:243px;width:245px;letter-spacing:-0.15px">农历<i style="display:inline-block;font-style:normal;width:6.5px;text-align:center">&nbsp;</i>甲辰<i style="display:inline-block;font-style:normal;width:6.5px;text-align:center">[</i>龙<i style="display:inline-block;font-style:normal;width:6.5px;text-align:center">]</i>年<i style="display:inline-block;font-style:normal;width:6.5px;text-align:center">&nbsp;</i>十二月小<i style="display:inline-block;font-style:normal;width:6.5px;text-align:center">&nbsp;</i>初一</div>
<div class="t c" style="left:546px;top:261px;width:245px">甲辰年<i style="display:inline-block;font-style:normal;width:6.5px;text-align:center">&nbsp;</i>丙子月<i style="display:inline-block;font-style:normal;width:6.5px;text-align:center">&nbsp;</i>己巳日</div>
<div class="t c" style="left:546px;top:279.5px;width:245px">回历<i style="display:inline-block;font-style:normal;width:6.5px;text-align:center">&nbsp;</i><span style="letter-spacing:-0.73px">1446</span>年<span style="letter-spacing:-0.73px">6</span>月<span style="letter-spacing:-0.73px">29</span>日</div>
<div class="t c" style="left:546px;top:300px;width:245px;color:#1a6fd6;letter-spacing:-0.2px">朔<i style="display:inline-block;font-style:normal;width:6.5px;text-align:center">&nbsp;</i><span style="letter-spacing:-0.73px">06</span><i style="display:inline-block;font-style:normal;width:6.5px;text-align:center">:</i><span style="letter-spacing:-0.73px">26</span><i style="display:inline-block;font-style:normal;width:6.5px;text-align:center">:</i><span style="letter-spacing:-0.73px">32</span></div>
<div class="t c" style="left:546px;top:315px;width:245px;color:#1a6fd6;letter-spacing:-0.3px">二九第<span style="letter-spacing:-0.73px">2</span>天</div>
<div class="t" style="left:568px;top:336px;letter-spacing:-0.1px">岁煞东<i style="display:inline-block;font-style:normal;width:6.5px;text-align:center">&nbsp;</i>生肖冲猪<i style="display:inline-block;font-style:normal;width:6.5px;text-align:center">(</i>癸亥）<i style="display:inline-block;font-style:normal;width:6.5px;text-align:center">&nbsp;</i>建星<i style="display:inline-block;font-style:normal;width:6.5px;text-align:center">&nbsp;</i>执</div>
<div class="t" style="left:568px;top:352px;letter-spacing:-0.1px">五行<i style="display:inline-block;font-style:normal;width:6.5px;text-align:center">&nbsp;</i>大林木<i style="display:inline-block;font-style:normal;width:6.5px;text-align:center">&nbsp;</i><i style="display:inline-block;font-style:normal;width:6.5px;text-align:center">&nbsp;</i>八卦<i style="display:inline-block;font-style:normal;width:6.5px;text-align:center">&nbsp;</i>兑<i style="display:inline-block;font-style:normal;width:6.5px;text-align:center">&nbsp;</i><i style="display:inline-block;font-style:normal;width:6.5px;text-align:center">&nbsp;</i>星宿<i style="display:inline-block;font-style:normal;width:6.5px;text-align:center">&nbsp;</i>觜</div>
<div class="t" style="left:568px;top:368.5px;letter-spacing:-0.1px">六曜<i style="display:inline-block;font-style:normal;width:6.5px;text-align:center">&nbsp;</i>赤口<i style="display:inline-block;font-style:normal;width:6.5px;text-align:center">&nbsp;</i><i style="display:inline-block;font-style:normal;width:6.5px;text-align:center">&nbsp;</i>九星<i style="display:inline-block;font-style:normal;width:6.5px;text-align:center">&nbsp;</i>六白</div>
<div class="t" style="left:568px;top:386px;letter-spacing:-0.1px">嫁娶<i style="display:inline-block;font-style:normal;width:6.5px;text-align:left">.</i>冠笄<i style="display:inline-block;font-style:normal;width:6.5px;text-align:left">.</i>祭祀<i style="display:inline-block;font-style:normal;width:6.5px;text-align:left">.</i>祈福<i style="display:inline-block;font-style:normal;width:6.5px;text-align:left">.</i>求嗣<i style="display:inline-block;font-style:normal;width:6.5px;text-align:left">.</i>斋醮<i style="display:inline-block;font-style:normal;width:6.5px;text-align:left">.</i>进人</div>
<div class="t" style="left:568px;top:401px;letter-spacing:-0.1px">口<i style="display:inline-block;font-style:normal;width:6.5px;text-align:left">.</i>会亲友<i style="display:inline-block;font-style:normal;width:6.5px;text-align:left">.</i>伐木<i style="display:inline-block;font-style:normal;width:6.5px;text-align:left">.</i>作梁<i style="display:inline-block;font-style:normal;width:6.5px;text-align:left">.</i>开柱眼<i style="display:inline-block;font-style:normal;width:6.5px;text-align:left">.</i>安床<i style="display:inline-block;font-style:normal;width:6.5px;text-align:left">.</i>掘</div>
<div class="t" style="left:568px;top:416px;letter-spacing:-0.1px">井<i style="display:inline-block;font-style:normal;width:6.5px;text-align:left">.</i>捕捉<i style="display:inline-block;font-style:normal;width:6.5px;text-align:left">.</i>畋猎</div>
<div class="t" style="left:568px;top:431px;letter-spacing:-0.1px">开生坟<i style="display:inline-block;font-style:normal;width:6.5px;text-align:left">.</i>破土<i style="display:inline-block;font-style:normal;width:6.5px;text-align:left">.</i>行丧<i style="display:inline-block;font-style:normal;width:6.5px;text-align:left">.</i>安葬</div>
<div class="t" style="left:548px;top:386px;color:#0a8a0a">宜</div>
<div class="t" style="left:548px;top:431px;color:#a52a2a">忌</div>
<div class="a" style="left:546px;top:513px;width:245px;height:1px;background:#5a5a5a"></div>
<div class="t c" style="left:546px;top:515.7px;width:245px;letter-spacing:-0.08px"><span style="letter-spacing:-0.83px">23</span><i style="display:inline-block;font-style:normal;width:6.4px;text-align:center">-</i><span style="letter-spacing:-0.83px">01</span>甲子时<i style="display:inline-block;font-style:normal;width:6.4px;text-align:center">&nbsp;</i><span style="letter-spacing:-0.83px">01</span><i style="display:inline-block;font-style:normal;width:6.4px;text-align:center">-</i><span style="letter-spacing:-0.83px">03</span>乙丑时<i style="display:inline-block;font-style:normal;width:6.4px;text-align:center">&nbsp;</i><span style="letter-spacing:-0.83px">03</span><i style="display:inline-block;font-style:normal;width:6.4px;text-align:center">-</i><span style="letter-spacing:-0.83px">05</span>丙寅时</div>
<div class="t c" style="left:546px;top:531.8px;width:245px;letter-spacing:-0.08px"><span style="letter-spacing:-0.83px">05</span><i style="display:inline-block;font-style:normal;width:6.4px;text-align:center">-</i><span style="letter-spacing:-0.83px">07</span>丁卯时<i style="display:inline-block;font-style:normal;width:6.4px;text-align:center">&nbsp;</i><span style="letter-spacing:-0.83px">07</span><i style="display:inline-block;font-style:normal;width:6.4px;text-align:center">-</i><span style="letter-spacing:-0.83px">09</span>戊辰时<i style="display:inline-block;font-style:normal;width:6.4px;text-align:center">&nbsp;</i><span style="letter-spacing:-0.83px">09</span><i style="display:inline-block;font-style:normal;width:6.4px;text-align:center">-</i><span style="letter-spacing:-0.83px">11</span>己巳时</div>
<div class="t c" style="left:546px;top:547.9px;width:245px;letter-spacing:-0.08px"><span style="letter-spacing:-0.83px">11</span><i style="display:inline-block;font-style:normal;width:6.4px;text-align:center">-</i><span style="letter-spacing:-0.83px">13</span>庚午时<i style="display:inline-block;font-style:normal;width:6.4px;text-align:center">&nbsp;</i><span style="letter-spacing:-0.83px">13</span><i style="display:inline-block;font-style:normal;width:6.4px;text-align:center">-</i><span style="letter-spacing:-0.83px">15</span>辛未时<i style="display:inline-block;font-style:normal;width:6.4px;text-align:center">&nbsp;</i><span style="letter-spacing:-0.83px">15</span><i style="display:inline-block;font-style:normal;width:6.4px;text-align:center">-</i><span style="letter-spacing:-0.83px">17</span>壬申时</div>
<div class="t c" style="left:546px;top:564px;width:245px;letter-spacing:-0.08px"><span style="letter-spacing:-0.83px">17</span><i style="display:inline-block;font-style:normal;width:6.4px;text-align:center">-</i><span style="letter-spacing:-0.83px">19</span>癸酉时<i style="display:inline-block;font-style:normal;width:6.4px;text-align:center">&nbsp;</i><span style="letter-spacing:-0.83px">19</span><i style="display:inline-block;font-style:normal;width:6.4px;text-align:center">-</i><span style="letter-spacing:-0.83px">21</span>甲戌时<i style="display:inline-block;font-style:normal;width:6.4px;text-align:center">&nbsp;</i><span style="letter-spacing:-0.83px">21</span><i style="display:inline-block;font-style:normal;width:6.4px;text-align:center">-</i><span style="letter-spacing:-0.83px">23</span>乙亥时</div>
<div class="a" style="left:545px;top:584px;width:247px;height:22px;background:#fff;border:1px solid #8c8c8c;border-right-color:#bdbdbd;border-bottom-color:#bdbdbd"></div>
<div class="t" style="left:552px;top:587px;font-size:14px">现在时间<i style="display:inline-block;font-style:normal;width:7.1px;text-align:center">:</i><span style="letter-spacing:-0.69px">2024</span>年<span style="letter-spacing:-0.69px">12</span>月<span style="letter-spacing:-0.69px">31</span>日<i style="display:inline-block;font-style:normal;width:7.1px;text-align:center">&nbsp;</i><i style="display:inline-block;font-style:normal;width:7.1px;text-align:center">&nbsp;</i><span style="letter-spacing:-0.69px">17</span><i style="display:inline-block;font-style:normal;width:7.1px;text-align:center">:</i><span style="letter-spacing:-0.69px">17</span><i style="display:inline-block;font-style:normal;width:7.1px;text-align:center">:</i><span style="letter-spacing:-0.69px">22</span></div>
</body></html>
